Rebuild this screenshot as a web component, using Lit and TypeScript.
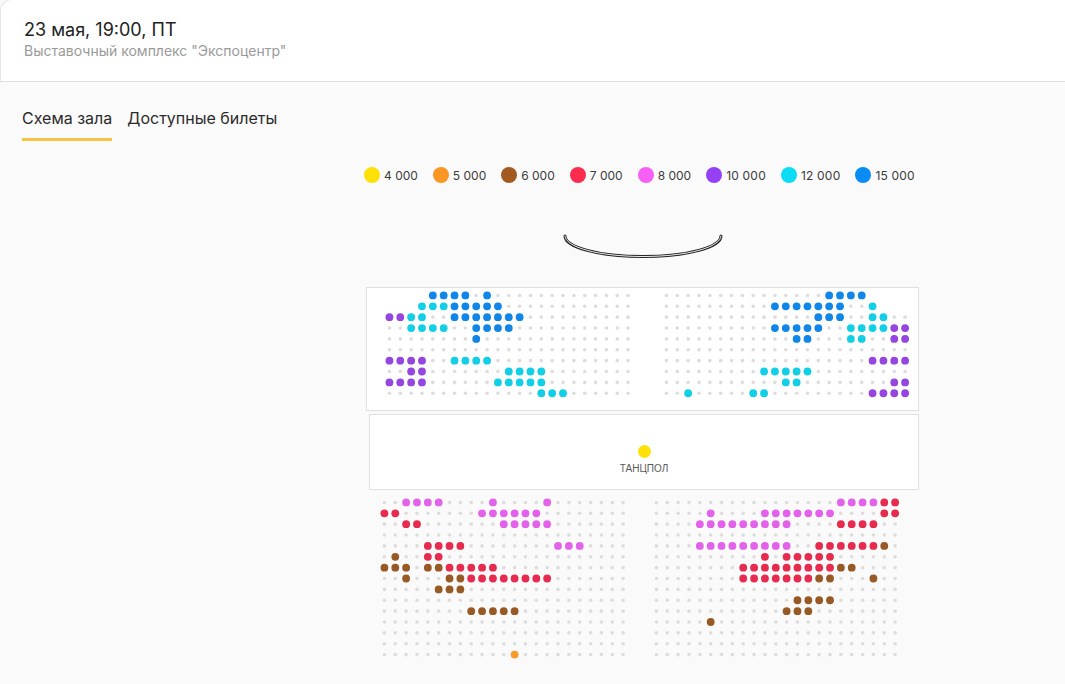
import { LitElement, html, css, svg } from 'lit';
import { customElement, property, state } from 'lit/decorators.js';

const PITCH_X = 10.85;
const PITCH_Y = 10.87;

// seat colours are a bit duller than the legend swatches in the reference
const SEAT_COLORS: Record<string, string> = {
  o: '#f79a2c',
  b: '#985a24',
  r: '#e62b4e',
  k: '#e263ea',
  v: '#9446de',
  c: '#12cfe6',
  s: '#1086e8',
};

const PRICES = [
  { label: '4 000', color: '#ffe108' },
  { label: '5 000', color: '#fb9624' },
  { label: '6 000', color: '#a35a20' },
  { label: '7 000', color: '#fb2c4e' },
  { label: '8 000', color: '#f75ff5' },
  { label: '10 000', color: '#9640f5' },
  { label: '12 000', color: '#0cdcf4' },
  { label: '15 000', color: '#0a8cf6' },
];

// one char per seat: '.' free grey dot, ' ' no seat, letter = price colour
const BALCONY_LEFT = [
  '    ssss.s.............',
  '   cccsssss............',
  'vvcc..sssssss..........',
  '..cccc..ssss...........',
  '........s..............',
  '.......................',
  'vvvv..cccc.............',
  '..vv.......cccc........',
  'vvvv......ccccc........',
  '..............ccc......',
];

const BALCONY_RIGHT = [
  '...............ssss    ',
  '..........sssssss..c   ',
  '..............sss..cc..',
  '..........sssss..ccccvv',
  '............ss...cc..vv',
  '.......................',
  '...................vvvv',
  '.........ccccc.........',
  '...........cc........vv',
  '..c.....cc.........vvvv',
];

const PARTERRE_LEFT = [
  '..kkkk....k....k.......',
  'rr.......kkkkkk........',
  '..rr.......kkkkk.......',
  '.......................',
  '....rrrr........kkk....',
  '.b..rr.................',
  'bbb.bbrrrrr............',
  '..b...bbrrrrrrrr.......',
  '.....bbb...............',
  '.......................',
  '........bbbbb..........',
  '.......................',
  '.......................',
  '.......................',
  '............o..........',
];

const PARTERRE_RIGHT = [
  '.................kkkkrr',
  '.....k....kkkkkkk....rr',
  '....kkkkkkkkk....rrrr..',
  '.......................',
  '....kkkkkkkkk..rrrrrrb.',
  '..........r.rrrrr......',
  '........rrrrrrrrrbb....',
  '........rrrrrrrbb...b..',
  '.......................',
  '.............bbbb......',
  '............bbb........',
  '.....b.................',
  '.......................',
  '.......................',
  '.......................',
];

@customElement('seat-block')
class SeatBlock extends LitElement {
  static styles = css`
    :host {
      display: block;
    }
    svg {
      display: block;
    }
    .free {
      fill: #dedcdc;
    }
  `;

  @property({ type: Array }) rows: string[] = [];

  render() {
    const cols = this.rows[0]?.length ?? 0;
    const w = cols * PITCH_X;
    const h = this.rows.length * PITCH_Y;
    return html`
      <svg width=${w} height=${h} viewBox="0 0 ${w} ${h}">
        ${this.rows.map((row, y) =>
          [...row].map((ch, x) => {
            if (ch === ' ') return null;
            const cx = (x + 0.5) * PITCH_X;
            const cy = (y + 0.5) * PITCH_Y;
            return ch === '.'
              ? svg`<circle class="free" cx=${cx} cy=${cy} r="1.8"></circle>`
              : svg`<circle cx=${cx} cy=${cy} r="3.9" fill=${SEAT_COLORS[ch]}></circle>`;
          })
        )}
      </svg>
    `;
  }
}

@customElement('app-root')
class AppRoot extends LitElement {
  static styles = css`
    :host {
      display: block;
      min-height: 684px;
      background: #fafafa;
      font-family: Inter, 'Noto Sans', sans-serif;
      color: #222;
      overflow: hidden;
    }

    .header {
      box-sizing: border-box;
      height: 83px;
      margin-top: -1px;
      padding: 19px 0 0 23px;
      background: #fff;
      border-left: 1px solid #e6e6e6;
      border-top: 1px solid #e6e6e6;
      border-bottom: 1px solid #dfdfdf;
      border-top-left-radius: 12px;
    }
    .title {
      font-size: 18px;
      line-height: 22px;
      color: #222;
    }
    .place {
      margin-top: 1px;
      font-size: 14px;
      line-height: 18px;
      color: #9a9a9a;
    }

    .tabs {
      display: flex;
      gap: 15px;
      padding: 23px 0 0 22px;
    }
    .tab {
      height: 33px;
      font-size: 16px;
      line-height: 26px;
      color: #2b2b2b;
    }
    .tab.active {
      border-bottom: 3px solid #f5c33f;
    }

    .hall {
      display: flex;
      flex-direction: column;
      width: 553px;
      margin: 25px 0 0 366px;
    }

    .legend {
      display: flex;
      gap: 15px;
      margin-left: -2px;
      white-space: nowrap;
    }
    .price {
      display: flex;
      align-items: center;
      gap: 4px;
      height: 18px;
      font-size: 12px;
      color: #3a3a3a;
    }
    /* the five digit prices run a little wider in the reference */
    .price:nth-child(n + 6) {
      letter-spacing: 0.2px;
    }
    .swatch {
      width: 16px;
      height: 16px;
      border-radius: 50%;
    }

    .stage {
      display: block;
      margin: 49px 0 0 196px;
    }

    .sector {
      box-sizing: border-box;
      background: #fff;
      border: 1px solid #e0e0e0;
    }
    .balcony {
      display: flex;
      gap: 27px;
      height: 124px;
      margin-top: 28px;
      padding: 2px 0 0 17px;
    }
    .floor {
      display: flex;
      flex-direction: column;
      align-items: center;
      height: 76px;
      margin: 3px 0 0 3px;
      padding-top: 30px;
    }
    .floor-dot {
      width: 13px;
      height: 13px;
      border-radius: 50%;
      background: #ffe108;
    }
    .floor-label {
      margin-top: 4px;
      font-family: 'Liberation Sans', sans-serif;
      font-size: 10px;
      line-height: 14px;
      color: #5a5a5a;
    }
    .parterre {
      display: flex;
      gap: 22px;
      margin: 7px 0 0 13px;
    }
  `;

  @state() tab = 'Схема зала';

  render() {
    return html`
      <div class="header">
        <div class="title">23 мая, 19:00, ПТ</div>
        <div class="place">Выставочный комплекс "Экспоцентр"</div>
      </div>
      <div class="tabs">
        ${['Схема зала', 'Доступные билеты'].map(
          (t) => html`<div class="tab ${t === this.tab ? 'active' : ''}">${t}</div>`
        )}
      </div>
      <div class="hall">
        <div class="legend">
          ${PRICES.map(
            (p) => html`
              <div class="price">
                <span class="swatch" style="background:${p.color}"></span>${p.label}
              </div>
            `
          )}
        </div>
        <svg class="stage" width="162" height="26" viewBox="0 0 162 26" fill="none">
          <path d="M3 3C3 14 36 23.5 81 23.5C126 23.5 159 14 159 3" stroke="#222" stroke-width="3" stroke-linecap="round"></path>
          <path d="M3 3C3 14 36 23.5 81 23.5C126 23.5 159 14 159 3" stroke="#eee" stroke-width="1" stroke-linecap="round"></path>
        </svg>
        <div class="sector balcony">
          <seat-block .rows=${BALCONY_LEFT}></seat-block>
          <seat-block .rows=${BALCONY_RIGHT}></seat-block>
        </div>
        <div class="sector floor">
          <div class="floor-dot"></div>
          <div class="floor-label">ТАНЦПОЛ</div>
        </div>
        <div class="parterre">
          <seat-block .rows=${PARTERRE_LEFT}></seat-block>
          <seat-block .rows=${PARTERRE_RIGHT}></seat-block>
        </div>
      </div>
    `;
  }
}
